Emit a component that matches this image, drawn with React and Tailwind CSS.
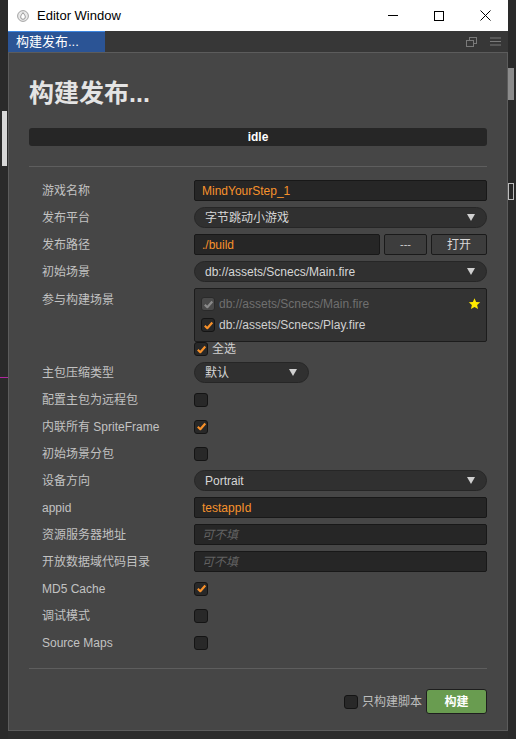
import { useState } from 'react';

const font = { fontFamily: "'Liberation Sans', 'Noto Sans CJK SC', sans-serif" };

function Check({ on, disabled }) {
  return (
    <span
      className={`flex h-[14px] w-[14px] shrink-0 items-center justify-center rounded-[3px] border ${
        disabled ? 'border-[#2a2a2a] bg-[#4a4a4a]' : 'border-[#141414] bg-[#282828]'
      }`}
    >
      {on && (
        <svg width="11" height="11" viewBox="0 0 11 11">
          <path
            d="M1.8 5.8 L4.3 8.2 L9.3 2.6"
            fill="none"
            stroke={disabled ? '#8a8a8a' : '#f6902a'}
            strokeWidth="2.2"
            strokeLinejoin="round"
          />
        </svg>
      )}
    </span>
  );
}

function Arrow() {
  return (
    <svg width="8" height="7" viewBox="0 0 8 7">
      <path d="M0 0 H8 L4 7 Z" fill="#d0d0d0" />
    </svg>
  );
}

function Select({ value, className = 'w-full' }) {
  return (
    <div className={`flex h-[21px] items-center justify-between rounded-full border border-[#262626] bg-[#303030] pl-[10px] pr-[11px] text-[12px] text-[#d6d6d6] ${className}`}>
      <span>{value}</span>
      <Arrow />
    </div>
  );
}

function Input({ value, placeholder, className = 'w-full' }) {
  return (
    <div className={`flex h-[21px] items-center rounded-[2px] border border-[#181818] bg-[#262626] px-[7px] text-[12px] ${className}`}>
      {value ? (
        <span className="text-[#f7922c]">{value}</span>
      ) : (
        <span className="italic text-[#626262]">{placeholder}</span>
      )}
    </div>
  );
}

function Row({ label, children }) {
  return (
    <div className="flex h-[27px] items-center">
      <div className="w-[165px] shrink-0 pl-[13px] text-[12px] text-[#c2c2c2]">{label}</div>
      <div className="flex flex-1 items-center">{children}</div>
    </div>
  );
}

export default function App() {
  const [all] = useState(true);

  return (
    <div className="flex h-[739px] w-[516px] overflow-hidden bg-[#2c2c2c]" style={font}>
      <div className="relative w-2 shrink-0 bg-[#2a2a2a]">
        <div className="absolute left-[2px] top-[111px] h-[55px] w-[5px] bg-[#d8d8d8]" />
        <div className="absolute left-0 top-[377px] h-px w-2 bg-[#b0279e]" />
      </div>

      <div className="flex h-[731px] w-[500px] shrink-0 flex-col">
        {/* title bar */}
        <div className="flex h-[31px] items-center bg-white">
          <svg className="ml-[9px]" width="12" height="12" viewBox="0 0 12 12">
            <circle cx="6" cy="6" r="5.4" fill="#e9e9e9" stroke="#9a9a9a" strokeWidth="0.9" />
            <path d="M6 2.6 C7.8 5 8.3 6 8.3 7 A2.3 2.3 0 0 1 3.7 7 C3.7 6 4.2 5 6 2.6 Z" fill="#fff" stroke="#8c8c8c" strokeWidth="0.9" />
          </svg>
          <span className="ml-[8px] text-[13px] text-black">Editor Window</span>
          <div className="ml-auto flex h-full">
            <div className="flex w-[46px] items-center justify-center">
              <div className="h-px w-[10px] bg-black" />
            </div>
            <div className="flex w-[46px] items-center justify-center">
              <div className="h-[10px] w-[10px] border border-black" />
            </div>
            <div className="flex w-[46px] items-center justify-center">
              <svg width="11" height="11" viewBox="0 0 11 11">
                <path d="M0.5 0.5 L10.5 10.5 M10.5 0.5 L0.5 10.5" stroke="#000" strokeWidth="1" />
              </svg>
            </div>
          </div>
        </div>

        {/* tab bar */}
        <div className="flex h-[21px] items-stretch bg-[#373737]">
          <div className="flex w-[97px] items-center border-t border-[#3d86e0] bg-[#2b5495] pl-[8px] text-[13px] text-white">
            构建发布...
          </div>
          <div className="ml-auto flex items-center gap-[13px] pr-[7px]">
            <svg width="11" height="10" viewBox="0 0 11 10">
              <rect x="3.5" y="0.5" width="7" height="6" fill="none" stroke="#7a7a7a" />
              <rect x="0.5" y="3.5" width="7" height="6" fill="#373737" stroke="#7a7a7a" />
            </svg>
            <svg width="11" height="9" viewBox="0 0 11 9">
              <path d="M0 1 H11 M0 4.5 H11 M0 8 H11" stroke="#7a7a7a" strokeWidth="1" />
            </svg>
          </div>
        </div>

        {/* panel */}
        <div className="flex flex-1 flex-col border border-[#5c5c5c] bg-[#464646] px-[20px]">
          <div className="mt-[25px] text-[25px] font-bold leading-[30px] text-[#e4e4e4]">构建发布...</div>
          <div className="mt-[20px] flex h-[18px] items-center justify-center rounded-[3px] bg-[#262626] text-[12px] font-bold text-white">
            idle
          </div>
          <div className="mt-[20px] h-px bg-[#5e5e5e]" />

          <div className="mt-[10px]">
            <Row label="游戏名称">
              <Input value="MindYourStep_1" />
            </Row>
            <Row label="发布平台">
              <Select value="字节跳动小游戏" />
            </Row>
            <Row label="发布路径">
              <Input value="./build" className="w-[186px]" />
              <div className="ml-[4px] flex h-[21px] w-[43px] items-center justify-center rounded-[2px] border border-[#1a1a1a] bg-[#3d3d3d] text-[11px] text-[#cfcfcf]">
                ---
              </div>
              <div className="ml-[4px] flex h-[21px] flex-1 items-center justify-center rounded-[2px] border border-[#1a1a1a] bg-[#3d3d3d] text-[12px] text-[#d8d8d8]">
                打开
              </div>
            </Row>
            <Row label="初始场景">
              <Select value="db://assets/Scnecs/Main.fire" />
            </Row>

            <div className="flex pt-[3px]">
              <div className="w-[165px] shrink-0 pl-[13px] pt-[3px] text-[12px] text-[#c2c2c2]">参与构建场景</div>
              <div className="flex h-[54px] flex-1 flex-col gap-[7px] rounded-[2px] border border-[#1c1c1c] bg-[#333333] pl-[6px] pr-[5px] pt-[8px]">
                <div className="flex h-[14px] items-center leading-[14px]">
                  <Check on disabled />
                  <span className="ml-[4px] text-[12px] text-[#6f6f6f]">db://assets/Scnecs/Main.fire</span>
                  <svg className="ml-auto" width="13" height="12" viewBox="0 0 24 23">
                    <path d="M12 0.5 L15.1 7.6 L23 8.3 L17 13.5 L18.8 21.2 L12 17.2 L5.2 21.2 L7 13.5 L1 8.3 L8.9 7.6 Z" fill="#ffea00" />
                  </svg>
                </div>
                <div className="flex h-[14px] items-center leading-[14px]">
                  <Check on />
                  <span className="ml-[4px] text-[12px] text-[#d0d0d0]">db://assets/Scnecs/Play.fire</span>
                </div>
              </div>
            </div>
            <div className="flex h-[17px]">
              <div className="w-[165px] shrink-0" />
              <div className="flex h-[14px] items-center leading-[14px]">
                <Check on={all} />
                <span className="ml-[4px] text-[12px] text-[#d0d0d0]">全选</span>
              </div>
            </div>

            <Row label="主包压缩类型">
              <Select value="默认" className="w-[115px]" />
            </Row>
            <Row label="配置主包为远程包">
              <Check />
            </Row>
            <Row label="内联所有 SpriteFrame">
              <Check on />
            </Row>
            <Row label="初始场景分包">
              <Check />
            </Row>
            <Row label="设备方向">
              <Select value="Portrait" />
            </Row>
            <Row label="appid">
              <Input value="testappId" />
            </Row>
            <Row label="资源服务器地址">
              <Input placeholder="可不填" />
            </Row>
            <Row label="开放数据域代码目录">
              <Input placeholder="可不填" />
            </Row>
            <Row label="MD5 Cache">
              <Check on />
            </Row>
            <Row label="调试模式">
              <Check />
            </Row>
            <Row label="Source Maps">
              <Check />
            </Row>
          </div>

          <div className="mt-[12px] h-px bg-[#5e5e5e]" />

          <div className="mt-[20px] flex items-center justify-end">
            <Check />
            <span className="ml-[4px] text-[12px] text-[#bdbdbd]">只构建脚本</span>
            <div className="ml-[4px] flex h-[25px] w-[61px] items-center justify-center rounded-[3px] border border-[#1e1e1e] bg-[#699c50] text-[12px] font-bold text-white">
              构建
            </div>
          </div>
        </div>
      </div>

      <div className="relative w-2 shrink-0 bg-[#2a2a2a]">
        <div className="absolute left-0 top-[68px] h-[32px] w-[6px] bg-[#8c8c8c]" />
        <div className="absolute left-0 top-[183px] h-[17px] w-[6px] border border-[#bdbdbd]" />
      </div>
    </div>
  );
}
